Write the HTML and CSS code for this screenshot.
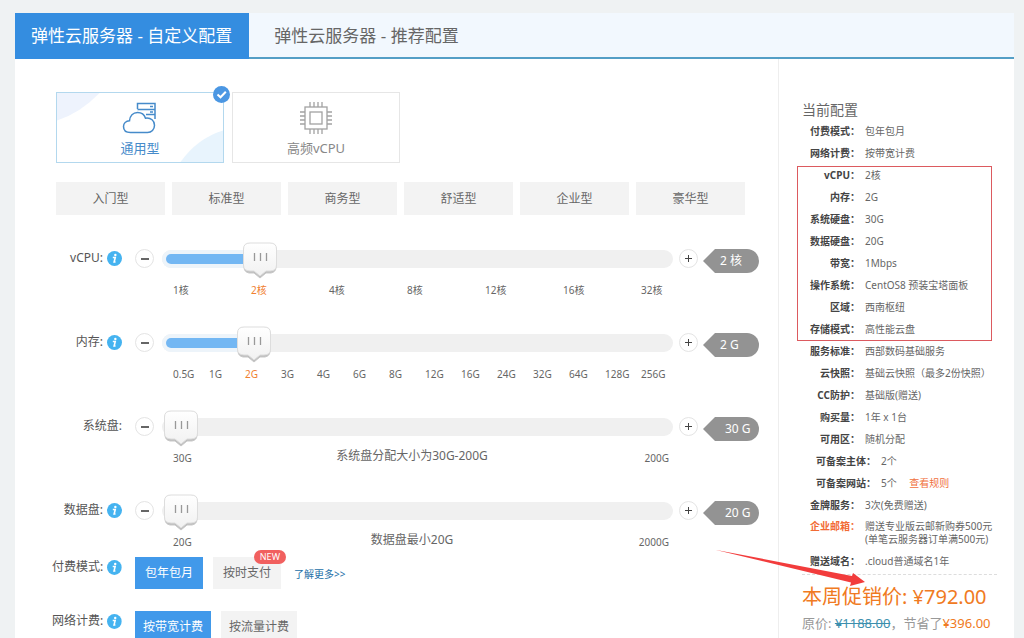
FILE: index.html
```html
<!DOCTYPE html>
<html lang="zh-CN">
<head>
<meta charset="utf-8">
<title>弹性云服务器</title>
<link rel="stylesheet" href="styles.css">
</head>
<body>
<svg class="defs" aria-hidden="true">
  <symbol id="info" viewBox="0 0 16 16">
    <circle cx="8" cy="8" r="8" fill="#45b3f0"/>
    <circle cx="8.9" cy="4.2" r="1.3" fill="#fff"/>
    <path d="M6.2 7h2.6l-1.2 4.8h1.5" fill="none" stroke="#fff" stroke-width="1.7"/>
  </symbol>
</svg>
<main class="panel">
  <nav class="tabs">
    <a class="tab tab-active" href="#custom">弹性云服务器 - 自定义配置</a>
    <a class="tab" href="#recommend">弹性云服务器 - 推荐配置</a>
  </nav>
  <div class="columns">
    <form class="config">
      <div class="cards">
        <button type="button" class="card card-active">
          <svg class="card-bg" viewBox="0 0 168 70" preserveAspectRatio="none" aria-hidden="true">
            <path d="M0 0H43Q24 20 0 28Z" fill="#eef3fd"/>
            <path d="M168 38V70H125Q142 46 168 38Z" fill="#e8f4fd"/>
          </svg>
          <svg class="card-icon" viewBox="0 0 36 32" fill="none" stroke="#468bca" stroke-width="1.5" aria-hidden="true">
            <path d="M8.500 30.500C4 30.500 1.500 28 1.500 24.500C1.500 21.500 4 19 7.500 18.800C8 14 11 10.500 15.500 10.500C19.500 10.500 22.500 13 23.500 16.200C29 15.500 32.500 18.800 32.500 23.200C32.500 27.500 29.500 30.500 25.500 30.500Z"/>
            <path d="M15.500 7V1.500H33V7.500H15.500M24 12.500H33V7.500M33 12V17M28 4.500H31M28 10H31"/>
          </svg>
          <span>通用型</span>
          <svg class="card-check" viewBox="0 0 17 17" aria-hidden="true"><circle cx="8.500" cy="8.500" r="8.500" fill="#4b97e3"/><path d="M4.500 8.500L7.500 11.300L12.800 5.800" fill="none" stroke="#fff" stroke-width="2"/></svg>
        </button>
        <button type="button" class="card">
          <svg class="card-icon" viewBox="0 0 36 32" fill="none" stroke="#a2a2a2" stroke-width="1.300" aria-hidden="true">
            <rect x="7" y="5" width="22" height="22"/><rect x="12" y="10" width="12" height="12"/>
            <path d="M12 5V0M16 5V0M20 5V0M24 5V0M12 32V27M16 32V27M20 32V27M24 32V27M2 10H7M2 14H7M2 18H7M2 22H7M29 10H34M29 14H34M29 18H34M29 22H34"/>
          </svg>
          <span>高频vCPU</span>
        </button>
      </div>
      <div class="presets">
        <button type="button">入门型</button><button type="button">标准型</button><button type="button">商务型</button><button type="button">舒适型</button><button type="button">企业型</button><button type="button">豪华型</button>
      </div>

      <div class="slider-row">
        <label class="label" for="cpu">vCPU: <svg class="info"><use href="#info"/></svg></label>
        <button type="button" class="step minus" aria-label="减少"></button>
        <div class="track"><span class="fill" style="width:18%"></span><input id="cpu" type="range" min="0" max="6" value="1"></div>
        <button type="button" class="step plus" aria-label="增加"></button>
        <output class="value" for="cpu">2 核</output>
        <div class="ticks"><span>1核</span><span class="on">2核</span><span>4核</span><span>8核</span><span>12核</span><span>16核</span><span>32核</span></div>
      </div>
      <div class="slider-row">
        <label class="label" for="mem">内存: <svg class="info"><use href="#info"/></svg></label>
        <button type="button" class="step minus" aria-label="减少"></button>
        <div class="track"><span class="fill" style="width:17%"></span><input id="mem" type="range" min="0" max="13" value="2"></div>
        <button type="button" class="step plus" aria-label="增加"></button>
        <output class="value" for="mem">2 G</output>
        <div class="ticks ticks-dense"><span>0.5G</span><span>1G</span><span class="on">2G</span><span>3G</span><span>4G</span><span>6G</span><span>8G</span><span>12G</span><span>16G</span><span>24G</span><span>32G</span><span>64G</span><span>128G</span><span>256G</span></div>
      </div>
      <div class="slider-row">
        <label class="label" for="sys">系统盘:</label>
        <button type="button" class="step minus" aria-label="减少"></button>
        <div class="track"><input id="sys" type="range" min="30" max="200" value="30"></div>
        <button type="button" class="step plus" aria-label="增加"></button>
        <output class="value value-disk" for="sys">30 G</output>
        <div class="limits"><span>30G</span><span class="hint">系统盘分配大小为30G-200G</span><span class="max">200G</span></div>
      </div>
      <div class="slider-row">
        <label class="label" for="data">数据盘: <svg class="info"><use href="#info"/></svg></label>
        <button type="button" class="step minus" aria-label="减少"></button>
        <div class="track"><input id="data" type="range" min="20" max="2000" value="20"></div>
        <button type="button" class="step plus" aria-label="增加"></button>
        <output class="value value-disk" for="data">20 G</output>
        <div class="limits"><span>20G</span><span class="hint">数据盘最小20G</span><span class="max">2000G</span></div>
      </div>

      <div class="option-row">
        <span class="label">付费模式: <svg class="info"><use href="#info"/></svg></span>
        <div class="options">
          <button type="button" class="option option-active">包年包月</button>
          <button type="button" class="option">按时支付<span class="badge">NEW</span></button>
          <a class="more" href="#more">了解更多&gt;&gt;</a>
        </div>
      </div>
      <div class="option-row">
        <span class="label">网络计费: <svg class="info"><use href="#info"/></svg></span>
        <div class="options">
          <button type="button" class="option option-active">按带宽计费</button>
          <button type="button" class="option">按流量计费</button>
        </div>
      </div>
    </form>

    <aside class="summary">
      <h2>当前配置</h2>
      <dl>
        <div class="item"><dt>付费模式：</dt><dd>包年包月</dd></div>
        <div class="item"><dt>网络计费：</dt><dd>按带宽计费</dd></div>
      </dl>
      <dl class="marked">
        <div class="item"><dt>vCPU：</dt><dd>2核</dd></div>
        <div class="item"><dt>内存：</dt><dd>2G</dd></div>
        <div class="item"><dt>系统硬盘：</dt><dd>30G</dd></div>
        <div class="item"><dt>数据硬盘：</dt><dd>20G</dd></div>
        <div class="item"><dt>带宽：</dt><dd>1Mbps</dd></div>
        <div class="item"><dt>操作系统：</dt><dd>CentOS8 预装宝塔面板</dd></div>
        <div class="item"><dt>区域：</dt><dd>西南枢纽</dd></div>
        <div class="item"><dt>存储模式：</dt><dd>高性能云盘</dd></div>
      </dl>
      <dl>
        <div class="item"><dt>服务标准：</dt><dd>西部数码基础服务</dd></div>
        <div class="item"><dt>云快照：</dt><dd>基础云快照（最多2份快照）</dd></div>
        <div class="item"><dt>CC防护：</dt><dd>基础版(赠送)</dd></div>
        <div class="item"><dt>购买量：</dt><dd>1年 x 1台</dd></div>
        <div class="item"><dt>可用区：</dt><dd>随机分配</dd></div>
        <div class="item item-wide"><dt>可备案主体：</dt><dd>2个</dd></div>
        <div class="item item-wide"><dt>可备案网站：</dt><dd>5个 <a class="rules" href="#rules">查看规则</a></dd></div>
        <div class="item"><dt>金牌服务：</dt><dd>3次(免费赠送)</dd></div>
        <div class="item item-gift"><dt>企业邮箱：</dt><dd>赠送专业版云邮新购券500元<br>(单笔云服务器订单满500元)</dd></div>
        <div class="item"><dt>赠送域名：</dt><dd>.cloud普通域名1年</dd></div>
      </dl>
      <div class="totals">
        <p class="price">本周促销价: ¥792.00</p>
        <p class="original">原价: <del>¥1188.00</del>，节省了<b>¥396.00</b></p>
        <svg class="arrow" viewBox="0 0 152 38" aria-hidden="true"><path d="M1 .7L138 27L139 24L151 33L136 37L137 33.500Z" fill="#f23c3c"/></svg>
      </div>
    </aside>
  </div>
</main>
</body>
</html>
```
FILE: styles.css
```css
* {
  box-sizing: border-box;
}

body {
  margin: 0;
  padding: 13px 10px 0 15px;
  background: #eff2f3;
  color: #666;
  font: 12px/18px "Noto Sans", "Noto Sans CJK SC", sans-serif;
}

button {
  margin: 0;
  padding: 0;
  border: 0;
  background: #f3f3f3;
  color: inherit;
  font: inherit;
}

a {
  text-decoration: none;
}

.defs {
  position: absolute;
  width: 0;
  height: 0;
}

.panel {
  background: #fff;
}

.tabs {
  display: flex;
  height: 46px;
  background: #f2f8fe;
  border-bottom: 2px solid #549fc6;
}

.tab {
  padding: 0 25px;
  color: #666;
  font-size: 17px;
  line-height: 46px;
}

.tab-active {
  height: 46px;
  padding: 0 17px 0 16px;
  background: #348de0;
  color: #fff;
}

.columns {
  display: flex;
}

.config {
  flex: 1;
  min-width: 0;
  padding: 33px 19px 0 37px;
}

.cards {
  display: flex;
  gap: 8px;
  padding-left: 4px;
}

.card {
  position: relative;
  display: flex;
  flex-direction: column;
  align-items: center;
  width: 168px;
  height: 71px;
  padding-top: 9px;
  border: 1px solid #e6e6e6;
  background: #fff;
  color: #888;
  font-size: 13px;
}

.card-active {
  border-color: #b3d8ee;
  color: #468bca;
}

.card-bg {
  position: absolute;
  top: 0;
  left: 0;
  width: 100%;
  height: 100%;
}

.card-icon {
  position: relative;
  width: 36px;
  height: 32px;
  margin-bottom: 5px;
}

.card span {
  position: relative;
}

.card-check {
  position: absolute;
  top: -7px;
  right: -7px;
  width: 17px;
  height: 17px;
}

.presets {
  display: grid;
  grid-template-columns: repeat(6, 1fr);
  gap: 7px;
  margin: 19px 14px 27px 4px;
}

.presets button {
  height: 33px;
}

.slider-row {
  display: grid;
  grid-template-columns: 71px 12px 20px 7px minmax(0, 1fr) 6px 20px 4px 56px;
  grid-template-rows: 38px auto;
  align-items: center;
  height: 84px;
}

.label {
  display: flex;
  justify-content: flex-end;
  align-items: center;
  gap: 4px;
  padding-right: 1px;
  color: #555;
  white-space: nowrap;
}

.slider-row .label {
  margin-bottom: 6px;
}

.info {
  width: 15px;
  height: 15px;
  margin-top: 1px;
}

.step {
  grid-column: 3;
  width: 19px;
  height: 19px;
  margin-bottom: 5px;
  border: 1px solid #e4e4e4;
  border-radius: 50%;
  background: linear-gradient(#666, #666) center / 8px 2px no-repeat #fff;
}

.plus {
  grid-column: 7;
  background: linear-gradient(#444, #444) center / 7px 1px no-repeat, linear-gradient(#444, #444) center / 1px 7px no-repeat, #fff;
}

.track {
  grid-column: 5;
  display: grid;
  grid-template-rows: 18px;
  align-items: center;
  height: 18px;
  margin-bottom: 4px;
  padding: 0 1px;
  border-radius: 9px;
  background: #f0f0f0;
}

.fill {
  grid-area: 1 / 1;
  height: 10px;
  margin-left: 3px;
  border-radius: 5px;
  background: #73b7f3;
  box-shadow: 0 0 0 4px #edf4fa;
}

.track input {
  grid-area: 1 / 1;
  width: 100%;
  height: 38px;
  margin: 4px 0 0;
  appearance: none;
  background: none;
}

.track input::-webkit-slider-thumb {
  appearance: none;
  width: 36px;
  height: 38px;
  border: 0;
  background: url("data:image/svg+xml,%3Csvg xmlns='http://www.w3.org/2000/svg' viewBox='0 0 36 38'%3E%3Cdefs%3E%3ClinearGradient id='g' x2='0' y2='1'%3E%3Cstop stop-color='%23fff'/%3E%3Cstop offset='1' stop-color='%23f1f1f1'/%3E%3C/linearGradient%3E%3C/defs%3E%3Cpath d='M8 2H28Q34 2 34 8V25Q34 30 29 31H24L18 36L12 31H7Q2 30 2 25V8Q2 2 8 2Z' fill='%23bcbcbc' stroke='%23c8c8c8'/%3E%3Cpath d='M8 1H28Q34.500 1 34.500 7V23Q34.500 29 28 29H24L18 34L12 29H8Q1.500 29 1.500 23V7Q1.500 1 8 1Z' fill='url(%23g)' stroke='%23ddd'/%3E%3Cpath d='M12.500 11V19M18.500 11V19M24.500 11V19' stroke='%23999' stroke-width='1.300'/%3E%3C/svg%3E") center / 36px 38px no-repeat;
}

.value {
  grid-column: 9;
  height: 24px;
  padding-left: 17px;
  border-radius: 0 12px 12px 0;
  background: #939393;
  clip-path: polygon(0 50%, 12px 0, 100% 0, 100% 100%, 12px 100%);
  color: #fff;
  line-height: 24px;
  white-space: nowrap;
}

.value-disk {
  padding-left: 22px;
}

.ticks,
.limits {
  grid-column: 5;
  display: grid;
  align-self: start;
  padding-left: 11px;
  font-size: 10px;
  white-space: nowrap;
}

.ticks {
  grid-template-columns: repeat(6, 39fr) 16fr;
  padding-top: 1px;
}

.ticks-dense {
  grid-template-columns: repeat(13, 18fr) 16fr;
}

.on {
  color: #f08030;
}

.limits {
  grid-template-columns: 1fr auto 1fr;
  padding-right: 4px;
  line-height: 20px;
}

.hint {
  margin-right: 18px;
  font-size: 12px;
  line-height: 16px;
}

.max {
  text-align: right;
}

.option-row {
  display: grid;
  grid-template-columns: 71px 1fr;
  gap: 12px;
  height: 54px;
  align-items: start;
}

.slider-row + .option-row {
  margin-top: -21px;
}

.option-row .label {
  padding-top: 1px;
}

.options {
  display: flex;
  gap: 10px;
}

.option {
  position: relative;
  min-width: 68px;
  height: 32px;
  padding: 0 8px;
}

.option-active {
  background: #4199ea;
  color: #fff;
}

.badge {
  position: absolute;
  top: -7px;
  right: -5px;
  padding: 0 6px;
  border-radius: 7px;
  background: #f1605f;
  color: #fff;
  font-size: 9px;
  line-height: 14px;
}

.more {
  padding-left: 3px;
  color: #2470a8;
  font-size: 10px;
  line-height: 34px;
}

.summary {
  width: 236px;
  flex: none;
  padding: 42px 17px 0 23px;
  border-left: 1px solid #eee;
  font-size: 10px;
}

.summary h2 {
  margin: 0 0 1px;
  font-size: 14px;
  font-weight: 400;
  line-height: 18px;
}

.summary dl {
  margin: 0;
}

.item {
  display: flex;
  gap: 5px;
  min-height: 22px;
  padding: 4px 0;
  line-height: 14px;
  white-space: nowrap;
}

.item dt {
  width: 58px;
  color: #444;
  font-weight: 700;
  text-align: right;
}

.item dd {
  margin: 0;
}

.item-wide dt {
  width: 74px;
}

.item-gift {
  line-height: 13px;
}

.item-gift dt {
  color: #f26b35;
}

.rules {
  margin-left: 10px;
  color: #f0703c;
}

.marked {
  position: relative;
}

.marked::before {
  content: "";
  position: absolute;
  inset: 2px 5px -1px -5px;
  border: 1px solid #dc5a5f;
}

.totals {
  position: relative;
  margin-top: 2px;
  border-top: 1px dashed #ddd;
}

.totals p {
  margin: 0;
  white-space: nowrap;
}

.price {
  padding-top: 8px;
  color: #f07a22;
  font-size: 20px;
  line-height: 28px;
}

.original {
  padding-top: 1px;
  color: #999;
  font-size: 13px;
  line-height: 22px;
}

.original del {
  color: #3c8fae;
}

.original b {
  color: #f07a22;
  font-weight: 400;
}

.arrow {
  position: absolute;
  top: -26px;
  left: -88px;
  width: 152px;
  height: 38px;
}
```
